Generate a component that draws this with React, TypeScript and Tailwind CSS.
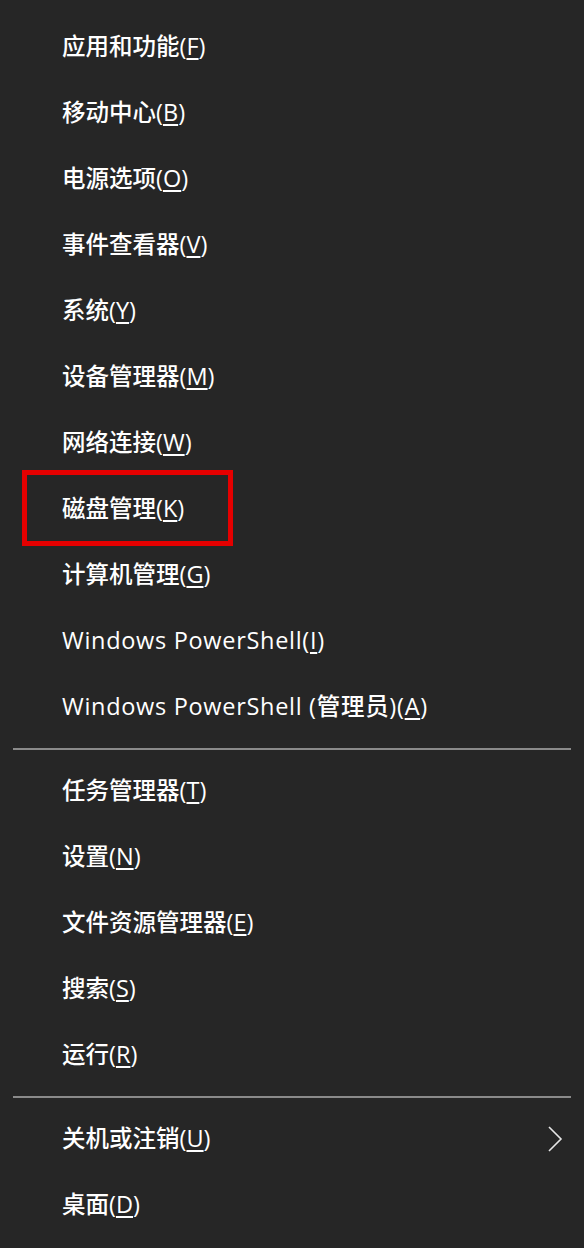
const font = '"Segoe UI", "Open Sans", "Noto Sans CJK SC", sans-serif';

type Item = { label: string; key: string; latin?: boolean; arrow?: boolean; boxed?: boolean };

const groups: Item[][] = [
  [
    { label: "应用和功能", key: "F" },
    { label: "移动中心", key: "B" },
    { label: "电源选项", key: "O" },
    { label: "事件查看器", key: "V" },
    { label: "系统", key: "Y" },
    { label: "设备管理器", key: "M" },
    { label: "网络连接", key: "W" },
    { label: "磁盘管理", key: "K", boxed: true },
    { label: "计算机管理", key: "G" },
    { label: "Windows PowerShell", key: "I", latin: true },
    { label: "Windows PowerShell (管理员)", key: "A", latin: true },
  ],
  [
    { label: "任务管理器", key: "T" },
    { label: "设置", key: "N" },
    { label: "文件资源管理器", key: "E" },
    { label: "搜索", key: "S" },
    { label: "运行", key: "R" },
  ],
  [
    { label: "关机或注销", key: "U", arrow: true },
    { label: "桌面", key: "D" },
  ],
];

function Row({ item }: { item: Item }) {
  return (
    <div className="relative flex h-[66px] items-center pl-[62px] pr-[20px]">
      {item.boxed && (
        <div className="absolute left-[22px] top-[-6px] h-[76px] w-[211px] border-[5px] border-[#e50000]" />
      )}
      <span
        className={
          item.latin
            ? "text-[23.5px] leading-none font-medium tracking-[0.7px] text-white"
            : "text-[23.5px] leading-none font-medium text-white"
        }
      >
        {item.label}(<span className="underline decoration-[1.5px] underline-offset-[3px]">{item.key}</span>)
      </span>
      {item.arrow && (
        <svg className="ml-auto" width="18" height="30" viewBox="0 0 18 30">
          <polyline points="3,3 15,15 3,27" fill="none" stroke="#e6e6e6" strokeWidth="1.6" />
        </svg>
      )}
    </div>
  );
}

export default function App() {
  return (
    <div className="min-h-[1248px] w-[584px] bg-[#262626] pt-[14px]" style={{ fontFamily: font }}>
      {groups.map((g, gi) => (
        <div key={gi}>
          {gi > 0 && <div className="mx-[13px] my-[8px] h-[2px] bg-[#8a8a8a]" />}
          {g.map((item) => (
            <Row key={item.key} item={item} />
          ))}
        </div>
      ))}
    </div>
  );
}
